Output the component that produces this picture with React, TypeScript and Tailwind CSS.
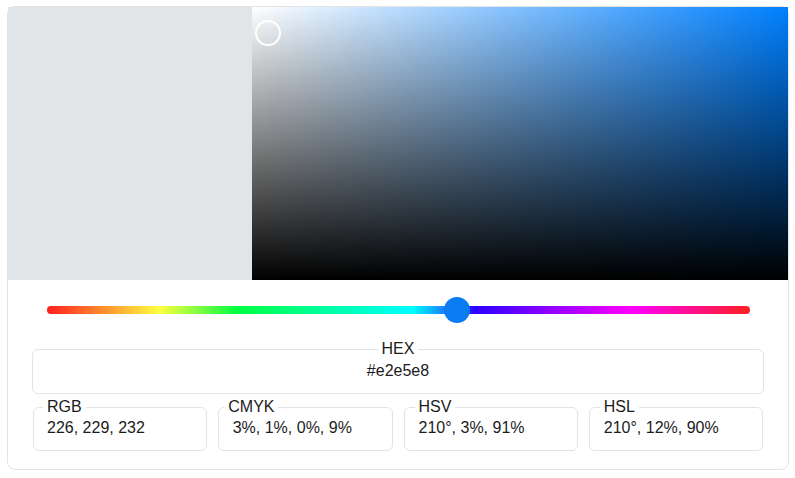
import React from 'react';

const fields = [
  { label: 'RGB', value: '226, 229, 232', boxClass: 'px-[13px]' },
  { label: 'CMYK', value: ' 3%, 1%, 0%, 9%', boxClass: 'px-[9px]' },
  { label: 'HSV', value: '210°, 3%, 91%', boxClass: 'px-[14px]' },
  { label: 'HSL', value: '210°, 12%, 90%', boxClass: 'px-[14px]' },
];

const hue = 210;

export default function App() {
  return (
    <div
      className="min-h-screen bg-white pl-[7px] pt-[6px] text-[#1c1c1c]"
      style={{ fontFamily: '"Liberation Sans", Arial, sans-serif' }}
    >
      <div className="w-[782px] h-[464px] rounded-lg border border-[#e3e3e3] bg-white">
        {/* Swatch + saturation/value area */}
        <div className="flex h-[273px]">
          <div className="w-[244px] bg-[#e2e5e8]" />
          <div className="relative flex-1 bg-[#0080ff]">
            <div className="absolute inset-0 bg-gradient-to-r from-white to-transparent" />
            <div className="absolute inset-0 bg-gradient-to-t from-black to-transparent" />
            <div className="absolute left-[3px] top-[13px] h-[26px] w-[26px] rounded-full border-2 border-white" />
          </div>
        </div>

        {/* Hue slider */}
        <div className="mt-[17px] pl-[39px] pr-[38px]">
          <div className="relative h-[26px]">
            <div
              className="absolute left-0 right-0 top-[9px] h-2 rounded-full"
              style={{
                background:
                  'linear-gradient(to right, #ff1e1e 0%, #ffff40 16%, #00ff40 27%, #00ffff 52%, #2a00ff 61%, #ff00ff 83%, #ff2020 100%)',
              }}
            />
            <div
              className="absolute top-0 h-[26px] w-[26px] -translate-x-1/2 rounded-full bg-[#0a7cf2]"
              style={{ left: `${(hue / 360) * 100}%` }}
            />
          </div>
        </div>

        {/* HEX */}
        <fieldset className="mx-[24px] mt-[17px] rounded-md border border-[#e3e3e3] px-3 pt-1 pb-[13px]">
          <legend className="mx-auto px-1 text-base leading-[18px]">HEX</legend>
          <div className="text-center text-base leading-[18px]">#e2e5e8</div>
        </fieldset>

        {/* Other color models */}
        <div className="mx-[25px] mt-[4px] grid grid-cols-4 gap-x-[11px]">
          {fields.map((f) => (
            <fieldset
              key={f.label}
              className={`${f.boxClass} rounded-md border border-[#e3e3e3] pt-[3px] pb-[13px]`}
            >
              <legend className="-ml-1 px-1 text-base leading-[18px]">{f.label}</legend>
              <div className="whitespace-pre text-base leading-[18px]">{f.value}</div>
            </fieldset>
          ))}
        </div>
      </div>
    </div>
  );
}
